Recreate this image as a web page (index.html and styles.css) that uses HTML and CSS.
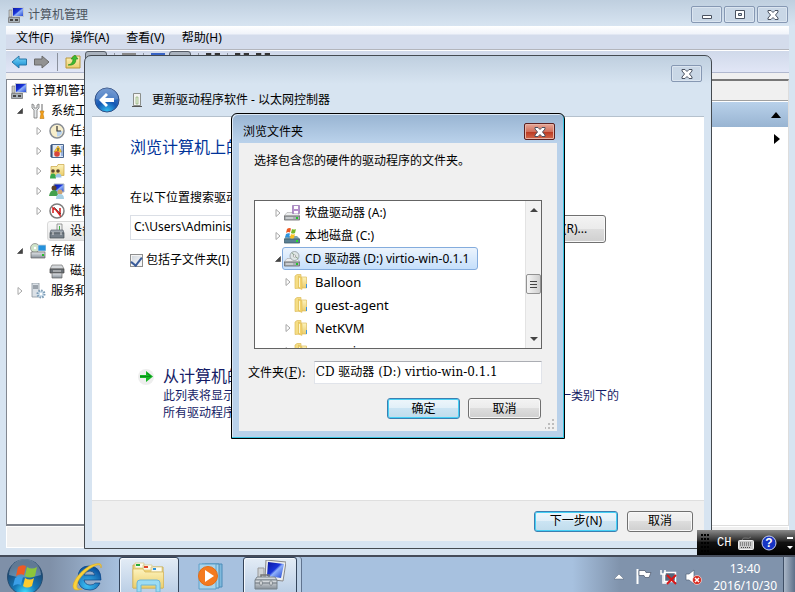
FILE: index.html
```html
<!DOCTYPE html>
<html lang="zh-CN">
    <head>
        <meta charset="utf-8">
        <title>计算机管理</title>
        <link rel="stylesheet" href="styles.css">
    </head>
    <body>
        <svg class="defs" width="0" height="0">
            <defs>
                <linearGradient id="gblue" x1="0" y1="0" x2="1" y2="1"><stop offset="0" stop-color="#0a16a0"/><stop offset=".45" stop-color="#1a35d8"/><stop offset=".55" stop-color="#8fb0fa"/><stop offset="1" stop-color="#1a3fd0"/></linearGradient>
                <linearGradient id="gfolder" x1="0" y1="0" x2="0" y2="1"><stop offset="0" stop-color="#fdf3bd"/><stop offset="1" stop-color="#ebce6c"/></linearGradient>
                <linearGradient id="gmetal" x1="0" y1="0" x2="0" y2="1"><stop offset="0" stop-color="#e4e7ea"/><stop offset="1" stop-color="#868f98"/></linearGradient>
                <linearGradient id="garrow" x1="0" y1="0" x2="0" y2="1"><stop offset="0" stop-color="#7fdcfb"/><stop offset="1" stop-color="#0f86cf"/></linearGradient>
                <radialGradient id="gie" cx=".4" cy=".8" r=".8"><stop offset="0" stop-color="#3cc0f5"/><stop offset="1" stop-color="#0a4f9c"/></radialGradient>
                <radialGradient id="gorb" cx=".5" cy=".95" r=".8"><stop offset="0" stop-color="#3fe0ff"/><stop offset=".4" stop-color="#1679b8"/><stop offset="1" stop-color="#1c3f66"/></radialGradient>
                <radialGradient id="gback" cx=".5" cy="1" r=".9"><stop offset="0" stop-color="#35c5f5"/><stop offset=".5" stop-color="#1458b4"/><stop offset="1" stop-color="#4a7cc4"/></radialGradient>
            </defs>
            <symbol id="computer" viewBox="0 0 16 16">
                <path d="M1 3h3v7H1z" fill="#c9c9c4" stroke="#777" stroke-width=".6"/>
                <path d="M4.500 .5h11v9h-11z" fill="url(#gblue)" stroke="#c3c9d0"/>
                <path d="M8 10h4v1H8z" fill="#999"/>
                <path d="M.5 10.500h11v5H.5z" fill="#a9b1b7" stroke="#777" stroke-width=".8"/>
                <path d="M2 12h3v2H2zM7 12h3v2H7z" fill="#444"/>
            </symbol>
            <symbol id="tools" viewBox="0 0 16 16">
                <path d="M2 1v4l2 2v8h3V7l2-2V1L7 2v3H4V2z" fill="#e5e8ea" stroke="#777" stroke-width=".8"/>
                <path d="M12 1v7" stroke="#9a9a9a" stroke-width="1.500"/>
                <path d="M10 8h4l-1 3 1 4.500h-4l1-4.500z" fill="#f3a01c" stroke="#c07a10" stroke-width=".6"/>
            </symbol>
            <symbol id="clock" viewBox="0 0 16 16">
                <circle cx="8" cy="8" r="7" fill="#f7eecb" stroke="#888d94" stroke-width="1.500"/>
                <path d="M8 8h5.500A5.500 5.500 0 0 1 8 13.500z" fill="#b9d3ef"/>
                <path d="M8 3v5h4" fill="none" stroke="#333" stroke-width="1.200"/>
            </symbol>
            <symbol id="event" viewBox="0 0 16 16">
                <path d="M2.500 1.500h12v13h-12z" fill="#dfe9f5" stroke="#4a668e"/>
                <path d="M1 3h3M1 5h3M1 7h3M1 9h3M1 11h3M1 13h3" stroke="#223a66"/>
                <path d="M9 3l4 6H5z" fill="#ffc930" stroke="#c79010" stroke-width=".6"/><path d="M9 5v3" stroke="#333"/>
                <circle cx="8" cy="11" r="2.800" fill="#d9463a"/><path d="M13 3v10" stroke="#5a82c8"/>
            </symbol>
            <symbol id="share" viewBox="0 0 16 16">
                <path d="M2 3.500h6l1-2h6v11H2z" fill="url(#gfolder)" stroke="#c9a544" stroke-width=".7"/>
                <circle cx="4" cy="8" r="1.800" fill="#5b4630"/><circle cx="9" cy="8" r="1.800" fill="#5b4630"/>
                <path d="M1 15.500q0-5 3-5t3 5z" fill="#37a84b"/><path d="M6.500 14.500q0-4 3-4t3 4z" fill="#9cc4e8"/>
            </symbol>
            <symbol id="users" viewBox="0 0 16 16">
                <path d="M5 1h10v8H5z" fill="url(#gblue)" stroke="#aab4c0"/>
                <circle cx="5" cy="5" r="2.500" fill="#5b4229"/><path d="M0 13q1-6 5-6t4 6z" fill="#44a04e"/>
                <circle cx="11" cy="9" r="2.500" fill="#d0a372"/><path d="M7 16q0-5 4-5t4 5z" fill="#a5cfe4"/>
            </symbol>
            <symbol id="perf" viewBox="0 0 16 16">
                <circle cx="8" cy="8" r="7" fill="#fff" stroke="#7c7c7c" stroke-width="1.500"/>
                <path d="M4 10V5l3 2 4 5V5" fill="none" stroke="#d51a1a" stroke-width="1.500"/>
                <path d="M5 4l7 7" stroke="#333" stroke-width=".7"/>
            </symbol>
            <symbol id="device" viewBox="0 0 16 16">
                <path d="M8 1h5v7H8z" fill="#eef0f0" stroke="#777" stroke-width=".7"/><path d="M10 3h1v4h-1z" fill="#43b645"/>
                <path d="M2 7h12l1 3H1z" fill="#9ea7b0" stroke="#5d6670" stroke-width=".7"/>
                <path d="M1 10h14v5H1z" fill="#77818b" stroke="#454d55" stroke-width=".7"/>
                <path d="M4 9v3M12 9v3" stroke="#ddd"/>
            </symbol>
            <symbol id="storage" viewBox="0 0 16 16">
                <circle cx="5" cy="5" r="4.500" fill="#cfe3c9" stroke="#8b8b8b" stroke-width=".8"/><circle cx="5" cy="5" r="1.200" fill="#fff"/>
                <path d="M8 2h8v6H8z" fill="#2592dc" stroke="#c7d0d8" stroke-width=".8"/>
                <path d="M1 9h14v6H1z" fill="url(#gmetal)" stroke="#666" stroke-width=".7"/><path d="M12 11h2v2h-2z" fill="#27bd2c"/>
            </symbol>
            <symbol id="disk" viewBox="0 0 16 16">
                <path d="M3 2h10l2 4H1z" fill="#d3d6d9" stroke="#777" stroke-width=".7"/>
                <path d="M1 6h14v4H1z" fill="#6c7278" stroke="#444" stroke-width=".7"/>
                <path d="M3 10h10v5H3z" fill="url(#gmetal)" stroke="#666" stroke-width=".7"/><path d="M4 8h8" stroke="#ddd"/>
            </symbol>
            <symbol id="services" viewBox="0 0 16 16">
                <path d="M2 0h7v14H2z" fill="#dbe1e7" stroke="#8a949e" stroke-width=".8"/><path d="M3 3h5M3 5h5" stroke="#5b6570"/>
                <circle cx="11" cy="11" r="3.500" fill="#c9dcea" stroke="#7d9cb6" stroke-width="2" stroke-dasharray="1.500 1.200"/><circle cx="11" cy="11" r="1.200" fill="#fff"/>
            </symbol>
            <symbol id="drive" viewBox="0 0 16 16">
                <path d="M3 7.500h10l3 3.500H0z" fill="#eceeef" stroke="#999" stroke-width=".5"/>
                <path d="M.4 11h15.200v4H.4z" fill="#a9b0b5" stroke="#666" stroke-width=".8"/>
                <path d="M2 13h7" stroke="#e8e8e8"/><path d="M12 12h2v2h-2z" fill="#24c52b"/>
            </symbol>
            <symbol id="folder" viewBox="0 0 14 16">
                <path d="M1 2l2-1.500h4V14l-6 .5z" fill="#f5dd84" stroke="#dcbb5c" stroke-width=".7"/>
                <path d="M7 3h5.500v11H7z" fill="url(#gfolder)" stroke="#dcbb5c" stroke-width=".7"/>
                <path d="M4.500 2L8 4v11.500L4.500 14z" fill="#f3d26c" stroke="#d9b650" stroke-width=".5"/><path d="M5.500 4v9" stroke="#fdf6cf"/><path d="M12.500 10v4" stroke="#3d93e0"/>
            </symbol>
            <symbol id="closed" viewBox="0 0 8 10"><path d="M2 1.500L6 5 2 8.500z" fill="#fff" stroke="#a6a6a6"/></symbol>
            <symbol id="opened" viewBox="0 0 8 10"><path d="M6.500 2.500v5h-5z" fill="#444" stroke="#222" stroke-width=".5"/></symbol>
            <symbol id="cross" viewBox="0 0 12 10"><path d="M1 .5h3l2 2 2-2h3v1.500L8.500 5 11 8v1.500H8l-2-2-2 2H1V8l2.500-3L1 2z" fill="#fff" stroke="#4a5260"/></symbol>
        </svg>

        <div class="desktop">
            <main class="window">
                <div class="titlebar">
                    <svg class="icon"><use href="#computer"/></svg>
                    <span>计算机管理</span>
                    <div class="controls">
                        <button class="control" aria-label="最小化"><svg width="12" height="10"><path d="M1.500 5.500h9v3h-9z" fill="#fff" stroke="#4a5260"/></svg></button>
                        <button class="control" aria-label="最大化"><svg width="12" height="10"><path d="M1.500 .5h9v8h-9z" fill="#fff" stroke="#4a5260"/><path d="M4.500 3.500h3v2h-3z" fill="#c9d7e6" stroke="#4a5260"/></svg></button>
                        <button class="control" aria-label="关闭"><svg width="12" height="10"><use href="#cross"/></svg></button>
                    </div>
                </div>
                <nav class="menubar">
                    <button>文件(F)</button>
                    <button>操作(A)</button>
                    <button>查看(V)</button>
                    <button>帮助(H)</button>
                </nav>
                <div class="toolbar">
                    <button aria-label="后退"><svg width="16" height="14"><path d="M1 7l7-6v3h7.500v6H8v3z" fill="url(#garrow)" stroke="#2877a8"/></svg></button>
                    <button aria-label="前进"><svg width="16" height="14"><path d="M15 7L8 1v3H.5v6H8v3z" fill="#929292" stroke="#6b6b6b"/></svg></button>
                    <span class="divider"></span>
                    <button aria-label="向上"><svg width="16" height="16"><path d="M1 4h6l1-2h7v12H1z" fill="url(#gfolder)" stroke="#b9973b"/><path d="M3 11q5-1 5-6H6l4-4 3 4h-2q0 7-8 6z" fill="#3dbb31" stroke="#27861f" stroke-width=".6"/></svg></button>
                    <button class="pressed" aria-label="显示控制台树"></button>
                    <span class="divider"></span>
                    <button class="tool gray" aria-label="导出列表"></button>
                    <span class="divider"></span>
                    <button class="tool blue" aria-label="帮助"></button>
                    <button class="pressed" aria-label="显示操作窗格"></button>
                    <span class="divider"></span>
                    <button class="tool dark" aria-label="扫描"></button>
                    <span class="divider"></span>
                    <button class="tool dark" aria-label="更新"></button>
                    <button class="tool dark" aria-label="禁用"></button>
                </div>
                <div class="panes">
                    <ul class="tree">
                        <li><svg class="icon"><use href="#computer"/></svg>计算机管理(本地)</li>
                        <li class="level2"><svg class="twist"><use href="#opened"/></svg><svg class="icon"><use href="#tools"/></svg>系统工具</li>
                        <li class="level3"><svg class="twist"><use href="#closed"/></svg><svg class="icon"><use href="#clock"/></svg>任务计划程序</li>
                        <li class="level3"><svg class="twist"><use href="#closed"/></svg><svg class="icon"><use href="#event"/></svg>事件查看器</li>
                        <li class="level3"><svg class="twist"><use href="#closed"/></svg><svg class="icon"><use href="#share"/></svg>共享文件夹</li>
                        <li class="level3"><svg class="twist"><use href="#closed"/></svg><svg class="icon"><use href="#users"/></svg>本地用户和组</li>
                        <li class="level3"><svg class="twist"><use href="#closed"/></svg><svg class="icon"><use href="#perf"/></svg>性能</li>
                        <li class="level3"><svg class="twist"></svg><span class="current"><svg class="icon"><use href="#device"/></svg>设备管理器</span></li>
                        <li class="level2"><svg class="twist"><use href="#opened"/></svg><svg class="icon"><use href="#storage"/></svg>存储</li>
                        <li class="level3"><svg class="twist"></svg><svg class="icon"><use href="#disk"/></svg>磁盘管理</li>
                        <li class="level2"><svg class="twist"><use href="#closed"/></svg><svg class="icon"><use href="#services"/></svg>服务和应用程序</li>
                    </ul>
                    <div class="middle"></div>
                    <aside class="actions">
                        <div class="actions-head"></div>
                        <div class="actions-group"><svg width="10" height="6"><path d="M5 0l5 6H0z"/></svg></div>
                        <div class="actions-more"><svg width="6" height="10"><path d="M0 0l6 5-6 5z"/></svg></div>
                    </aside>
                </div>
                <div class="statusbar"></div>
            </main>

            <section class="wizard">
                <div class="wizard-caption">
                    <button class="control" aria-label="关闭"><svg width="12" height="10"><use href="#cross"/></svg></button>
                </div>
                <header class="wizard-head">
                    <button class="back" aria-label="后退"><svg width="26" height="26"><circle cx="13" cy="13" r="12" fill="url(#gback)" stroke="#304f86"/><path d="M2 12a11 11 0 0 1 22 0q-11 4-22 0z" fill="#fff" opacity=".2"/><path d="M5 13l7-7 2 2-3 3h9v4h-9l3 3-2 2z" fill="#fff"/></svg></button>
                    <svg width="10" height="16"><path d="M1.500 1.500h7v12h-7z" fill="#f3f3f0" stroke="#8b8f8b"/><path d="M4 5h2v7H4z" fill="#e4efd8" stroke="#7fa668" stroke-width=".6"/><path d="M0 14.500h10" stroke="#555"/></svg>
                    <span>更新驱动程序软件 - 以太网控制器</span>
                </header>
                <div class="wizard-body">
                    <h1>浏览计算机上的驱动程序文件</h1>
                    <label class="path-label" for="path">在以下位置搜索驱动程序软件:</label>
                    <div class="path-row">
                        <input id="path" type="text" value="C:\Users\Administrator\Documents">
                        <button class="button browse">浏览(R)...</button>
                    </div>
                    <label class="check"><input type="checkbox" checked><span>包括子文件夹(I)</span></label>
                    <button class="choice">
                        <svg width="17" height="17"><circle cx="8" cy="9" r="8" fill="#eee"/><path d="M2 7h6V3l7 5.500L8 14v-4H2z" fill="#14b823"/><path d="M2 8.500h11M9 5l4 3.500" fill="none" stroke="#0b8a1c"/></svg>
                        <span class="choice-title">从计算机的设备驱动程序列表中选择(L)</span>
                        <span class="choice-note">此列表将显示与该设备兼容的已安装的驱动程序软件，以及与该设备处于同一类别下的所有驱动程序软件。</span>
                    </button>
                </div>
                <footer class="wizard-foot">
                    <button class="button primary next">下一步(N)</button>
                    <button class="button cancel">取消</button>
                </footer>
            </section>

            <section class="dialog">
                <div class="dialog-caption">
                    <span>浏览文件夹</span>
                    <button class="close" aria-label="关闭"><svg width="12" height="10"><use href="#cross"/></svg></button>
                </div>
                <div class="dialog-body">
                    <p>选择包含您的硬件的驱动程序的文件夹。</p>
                    <div class="browser">
                        <ul class="folders">
                            <li><svg class="twist"><use href="#closed"/></svg><span class="item"><svg class="icon"><use href="#drive"/><path d="M8.500 .5h7v8h-7z" fill="#b58fcb" stroke="#8c68aa" stroke-width=".6"/><path d="M10 1h4v3h-4zM10 6h4v2.500h-4z" fill="#fff"/></svg>软盘驱动器 (A:)</span></li>
                            <li><svg class="twist"><use href="#closed"/></svg><span class="item"><svg class="icon"><path d="M2 8h11l3 3H0z" fill="#7fa3b4"/><path d="M.4 11h15.200v4H.4z" fill="#5b8093" stroke="#3d5b6a" stroke-width=".8"/><path d="M12 12h2v2h-2z" fill="#24e52b"/><path d="M3 1q2-1.500 4-.5l-1 4q-2-1-4 .5z" fill="#ed5a24"/><path d="M8 1q2 1 4 0l-1 4q-2 1-4 0z" fill="#77b829"/><path d="M2 6q2-1 4-.5l-1 4q-2-1-4 0z" fill="#2f94dd"/><path d="M7 6q2 1 4 0l-1 4q-2 1-4 0z" fill="#fbc321"/></svg>本地磁盘 (C:)</span></li>
                            <li><svg class="twist"><use href="#opened"/></svg><span class="item selected"><svg class="icon"><use href="#drive"/><circle cx="10.500" cy="5" r="4.500" fill="#dfe6e6" stroke="#848c90" stroke-width=".7"/><path d="M10.500 5L8 1.500M10.500 5l3.500 2.500" stroke="#8aa58a"/><circle cx="10.500" cy="5" r="1.200" fill="#fff" stroke="#888" stroke-width=".6"/></svg>CD 驱动器 (D:) virtio-win-0.1.1</span></li>
                            <li class="sub"><svg class="twist"><use href="#closed"/></svg><span class="item"><svg class="folder"><use href="#folder"/></svg>Balloon</span></li>
                            <li class="sub"><svg class="twist"></svg><span class="item"><svg class="folder"><use href="#folder"/></svg>guest-agent</span></li>
                            <li class="sub"><svg class="twist"><use href="#closed"/></svg><span class="item"><svg class="folder"><use href="#folder"/></svg>NetKVM</span></li>
                            <li class="sub"><svg class="twist"><use href="#closed"/></svg><span class="item"><svg class="folder"><use href="#folder"/></svg>pvpanic</span></li>
                        </ul>
                        <div class="scrollbar">
                            <svg width="8" height="4"><path d="M4 0l4 4H0z" fill="#444"/></svg>
                            <div class="thumb"><i></i><i></i><i></i></div>
                            <svg width="8" height="4"><path d="M0 0h8L4 4z" fill="#444"/></svg>
                        </div>
                    </div>
                    <div class="name-row">
                        <label for="folder-name">文件夹(<u>F</u>):</label>
                        <input id="folder-name" type="text" value="CD 驱动器 (D:) virtio-win-0.1.1">
                    </div>
                    <div class="dialog-buttons">
                        <button class="button primary">确定</button>
                        <button class="button">取消</button>
                    </div>
                    <svg class="grip" width="10" height="10"><path d="M7 0h2v2H7zM7 4h2v2H7zM7 8h2v2H7zM3 4h2v2H3zM3 8h2v2H3zM0 8h1v2H0z" fill="#bdbdbd"/></svg>
                </div>
            </section>

            <div class="language">
                <svg width="9" height="18"><path d="M1 0v18M4 0v18M7 0v18" stroke="#000" stroke-width="2" stroke-dasharray="2 2"/></svg>
                <span>CH</span>
                <svg width="16" height="14"><path d="M4 4q1-3 4-2t5-1" fill="none" stroke="#777"/><rect x=".5" y="4.500" width="15" height="9" rx="1" fill="#c9c9c9" stroke="#efefef"/><path d="M2 7h12M2 9h12M3 11.500h10" stroke="#444" stroke-dasharray="1 1"/></svg>
                <svg width="16" height="16"><circle cx="8" cy="8" r="7" fill="#1634c4" stroke="#c7cff0"/><text x="8" y="12" text-anchor="middle" class="question">?</text></svg>
                <svg class="options" width="6" height="14"><path d="M0 1h6v2H0zM0 10h6l-3 3z" fill="#fff"/></svg>
            </div>

            <footer class="taskbar">
                <button class="start" aria-label="开始"><svg width="38" height="38"><circle cx="19" cy="19" r="17.500" fill="url(#gorb)" stroke="#274d70"/><path d="M3 17a16 16 0 0 1 32 0q-16 5-32 0z" fill="#fff" opacity=".3"/><path d="M12 9q4-3 8-1l-2 9q-4-2-8 1z" fill="#ee5a23"/><path d="M21 9q5 3 10 0l-2 9q-5 3-10 0z" fill="#8cc63a"/><path d="M9 20q4-3 8-1l-2 8q-4-2-8 1z" fill="#3b9fe8"/><path d="M19 20q5 3 9 0l-2 8q-5 3-9 0z" fill="#fccb2e"/></svg></button>
                <button class="task ie" aria-label="Internet Explorer"><svg width="34" height="32"><path d="M31 19H14q1 5 6 5 4 0 5-2h5q-3 7-10 7-12 0-12-12T19 5q12 0 12 14zM14 14h11q-1-4-5-4-5 0-6 4z" fill="url(#gie)" stroke="#0c4484" stroke-width=".7"/><path d="M31 7q2-6-6-4C15 5 4 17 3 25q0 6 9 3-6 1-5-4C8 17 18 7 27 4q4-1 4 3z" fill="#fbd23a" stroke="#d9a722" stroke-width=".6"/></svg></button>
                <button class="task active" aria-label="资源管理器"><svg width="34" height="32"><path d="M1 9V4h9l2 3h9v-1h10v21H1z" fill="#f3d77a" stroke="#c9ac55"/><path d="M3 2h9v5H3zM11 4h9v5h-9zM19 6h11v5H19z" fill="#fdfbee" stroke="#d5c583" stroke-width=".7"/><path d="M4 3h4v2H4z" fill="#25ac3c"/><path d="M12 5h4v2h-4z" fill="#df442a"/><path d="M21 7h3v2h-3z" fill="#2c93dc"/><path d="M1 8h10l2 3h18.500v16H1z" fill="url(#gfolder)" stroke="#d5b458" stroke-width=".7"/><path d="M5 31v-9q0-3 3-3h17q3 0 3 3v9h-4v-7H9v7z" fill="#9bdcf4" stroke="#6db6d8"/></svg></button>
                <button class="task" aria-label="Media Player"><svg width="30" height="30"><path d="M9 3h17v23H9z" fill="#7fb9dc" stroke="#4c8cb8"/><path d="M6 3h17v24H6z" fill="#a5d4ec" stroke="#4c8cb8"/><path d="M3 3h17v25H3z" fill="#a9d3ea" stroke="#5fa0c8"/><circle cx="12" cy="15" r="9.500" fill="#f47a1f" stroke="#e56c14"/><path d="M9 9l9 6-9 6z" fill="#fff"/></svg></button>
                <button class="task active mmc" aria-label="计算机管理"><svg width="32" height="32"><path d="M12 0l20 2-3 19-18-2z" fill="#eceeef" stroke="#888"/><path d="M14 2l16 2-3 14-14-2z" fill="url(#gblue)"/><path d="M4 8h6v11H4z" fill="#cfd2d4" stroke="#999"/><path d="M7 19v-4h8v4" fill="none" stroke="#777" stroke-width="1.500"/><path d="M3 17h18l2 3H1z" fill="#d3d8dc" stroke="#7d858d"/><path d="M1 20h22v9H1z" fill="url(#gmetal)" stroke="#79828a"/><path d="M1 23h22" stroke="#6a737b"/><path d="M6 21h2v4H6zM16 21h2v4h-2z" fill="#fff" stroke="#59616a" stroke-width=".6"/></svg></button>
                <div class="tray">
                    <svg width="10" height="6"><path d="M5 0l5 5H0z" fill="#fff" stroke="#55657b" stroke-width=".5"/></svg>
                    <svg width="16" height="16"><path d="M1.500 0v15" stroke="#fff" stroke-width="2"/><path d="M3 1.500h6l1 2h5l-2 5H9l-1-2H3z" fill="#fff" stroke="#4a5568" stroke-width=".7"/></svg>
                    <svg width="17" height="16"><path d="M4.500 3.500h11v9h-11z" fill="#56657b" stroke="#fff" stroke-width="1.500"/><path d="M1 1v4h4V1M3 5v9h6" fill="none" stroke="#fff" stroke-width="1.500"/><path d="M7 6l9 9M16 6l-9 9" stroke="#d81818" stroke-width="2"/></svg>
                    <svg width="17" height="16"><path d="M1 5h3l5-4v14l-5-4H1z" fill="#fff" stroke="#54647a" stroke-width=".7"/><circle cx="12" cy="11" r="4.500" fill="#d8281c" stroke="#fff" stroke-width=".6"/><path d="M10 9l4 4M14 9l-4 4" stroke="#fff" stroke-width="1.500"/></svg>
                    <div class="clock"><span>13:40</span><span>2016/10/30</span></div>
                    <button class="show-desktop" aria-label="显示桌面"></button>
                </div>
            </footer>
        </div>
    </body>
</html>
```

FILE: styles.css
```css
* {
    box-sizing: border-box;
}
body {
    margin: 0;
    font-family: "Noto Sans", "Noto Sans CJK SC", sans-serif;
    font-size: 12px;
    line-height: 16px;
    color: #000;
}
button, input {
    font: inherit;
    color: inherit;
    margin: 0;
}
button {
    padding: 0;
    border: 0;
    background: none;
}
ul {
    list-style: none;
    margin: 0;
    padding: 0;
}
svg {
    flex: none;
    display: block;
}
.defs {
    position: absolute;
}
.icon {
    width: 16px;
    height: 16px;
}
.folder {
    width: 14px;
    height: 16px;
}
.twist {
    width: 12px;
    height: 10px;
}
.desktop {
    position: relative;
    display: flex;
    flex-direction: column;
    height: 100vh;
    overflow: hidden;
}

/* computer management window */
.window {
    flex: 1;
    min-height: 0;
    display: flex;
    flex-direction: column;
    padding: 0 6px 7px;
    background: linear-gradient(#bfcfdf, #d7e4f1 26px);
}
.titlebar {
    display: flex;
    align-items: center;
    gap: 4px;
    height: 26px;
    padding: 3px 0 0 2px;
    color: #4b545e;
    flex: none;
}
.controls {
    display: flex;
    gap: 2px;
    margin-left: auto;
    margin-right: 1px;
}
.control {
    display: flex;
    align-items: center;
    justify-content: center;
    width: 31px;
    height: 17px;
    border: 1px solid #8698b3;
    border-radius: 2px;
    background: #c9d7e6;
    box-shadow: inset 0 0 0 1px #dbe5f0;
}
.menubar {
    display: flex;
    flex: none;
    gap: 17px;
    height: 24px;
    padding: 0 10px;
    background: linear-gradient(#fff, #f0f3fa 8px, #d4dcec 9px, #d4dcec);
    border-bottom: 1px solid #b3b5bc;
}
.toolbar {
    display: flex;
    flex: none;
    align-items: center;
    gap: 7px;
    height: 23px;
    padding: 0 5px;
    border-top: 1px solid #fff;
    border-bottom: 1px solid #b0b8cf;
    background: linear-gradient(#d0d9ea, #e1e6f6);
}
.divider {
    width: 1px;
    height: 18px;
    background: #8b919d;
}
.pressed {
    width: 22px;
    height: 21px;
    margin-left: -3px;
    border: 1px solid #555c66;
    border-radius: 3px;
    background: #aab3be;
}
.tool {
    width: 14px;
    height: 18px;
    border-top: 2px solid #888;
}
.tool.blue {
    border-color: #3763c4;
}
.tool.dark {
    border-top: 2px dashed #333;
}
.panes {
    flex: 1;
    min-height: 0;
    display: flex;
    gap: 4px;
    padding-top: 6px;
    background: #f0f0f0;
}
.tree {
    width: 200px;
    padding-top: 1px;
    overflow: hidden;
    background: #fff;
    border: 1px solid #828790;
    border-bottom-width: 2px;
}
.tree li {
    display: flex;
    align-items: center;
    gap: 5px;
    height: 20px;
    padding-left: 4px;
    white-space: nowrap;
}
.tree .level2 {
    padding-left: 7px;
}
.tree .level3 {
    padding-left: 26px;
}
.tree .twist {
    margin-right: -1px;
}
.current {
    display: flex;
    align-items: center;
    gap: 5px;
    height: 20px;
    margin-left: -2px;
    padding: 0 6px 0 1px;
    border: 1px solid #d9d9d9;
    border-radius: 3px;
    background: linear-gradient(#fafafa, #e5e5e5);
}
.middle {
    flex: 1;
    background: #fff;
    border: 1px solid #828790;
}
.actions {
    width: 150px;
    background: #fff;
    border-top: 2px solid #777;
    border-right: 1px solid #ddd;
    border-bottom: 1px solid #ddd;
}
.actions-head {
    height: 20px;
    background: #f0f0f0;
    border-bottom: 1px solid #a0a0a0;
}
.actions-group, .actions-more {
    display: flex;
    align-items: center;
    justify-content: flex-end;
    height: 25px;
    padding-right: 7px;
}
.actions-group {
    margin-top: 1px;
    background: linear-gradient(#b9d1ea, #98b4d2);
}
.actions-more {
    height: 23px;
    padding-right: 8px;
}
.statusbar {
    flex: none;
    height: 22px;
    border: 1px solid #fff;
    background: #f0f0f0;
}

/* driver update wizard */
.wizard {
    position: absolute;
    top: 55px;
    left: 84px;
    right: 83px;
    bottom: 43px;
    display: flex;
    flex-direction: column;
    padding: 0 7px 7px;
    border: 1px solid #444a50;
    border-radius: 7px 7px 0 0;
    background: linear-gradient(#bfcfdf, #d7e4f1 28px);
}
.wizard-caption {
    display: flex;
    justify-content: flex-end;
    padding: 9px 2px 0;
    height: 27px;
}
.wizard-head {
    display: flex;
    align-items: center;
    gap: 12px;
    height: 34px;
    padding-left: 2px;
    border-bottom: 1px solid #b5c1cd;
}
.wizard-head svg + span {
    margin-left: -2px;
}
.wizard-body {
    flex: 1;
    min-height: 0;
    display: flex;
    flex-direction: column;
    align-items: flex-start;
    padding: 18px 38px 0;
    background: #fff;
}
.wizard-body h1 {
    margin: 0 0 31px;
    font-size: 16px;
    line-height: 24px;
    font-weight: normal;
    color: #003399;
}
.path-label {
    margin-bottom: 9px;
}
.path-row {
    display: flex;
    align-items: flex-start;
    gap: 6px;
    width: 100%;
    padding-right: 60px;
}
.path-row input {
    flex: 1;
    height: 25px;
    padding: 0 3px 2px;
    border: 1px solid #dbdfe6;
}
.button {
    height: 21px;
    border: 1px solid #707070;
    border-radius: 3px;
    background: linear-gradient(#f3f3f3, #ebebeb 50%, #dddddd 50%, #cfcfcf);
    box-shadow: inset 0 0 0 1px #f8f8f8;
}
.button.primary {
    border-color: #3c7fb1;
    background: linear-gradient(#eef6fb, #e0eff8 50%, #cbe4f3 50%, #c0dcec);
    box-shadow: inset 0 0 0 1px #45d0f5;
}
.button.browse {
    width: 86px;
    height: 28px;
}
.check {
    display: flex;
    align-items: center;
    gap: 3px;
    margin-top: 9px;
}
.check input {
    appearance: none;
    display: flex;
    justify-content: center;
    width: 13px;
    height: 13px;
    border: 1px solid #8e8f8f;
    background: linear-gradient(135deg, #cdd3da, #fff);
    box-shadow: inset 0 0 0 1px #f4f4f4;
}
.check input:checked::after {
    content: "";
    width: 5px;
    height: 9px;
    border: solid #3a5c9a;
    border-width: 0 2px 2px 0;
    transform: rotate(38deg);
}
.choice {
    display: grid;
    grid-template-columns: 17px 1fr;
    column-gap: 8px;
    align-items: center;
    width: 100%;
    max-width: 500px;
    margin-top: 97px;
    padding: 0 0 0 8px;
    text-align: left;
    color: #151c66;
}
.choice-title {
    font-size: 16px;
    line-height: 22px;
}
.choice-note {
    grid-column: 2;
    line-height: 17px;
}
.wizard-foot {
    display: flex;
    align-items: center;
    justify-content: flex-end;
    gap: 9px;
    height: 41px;
    padding: 0 11px;
    border-top: 1px solid #dfdfdf;
    background: #f0f0f0;
}
.next {
    width: 84px;
}
.cancel {
    width: 66px;
}

/* folder picker */
.dialog {
    position: absolute;
    top: 113px;
    left: 231px;
    width: 334px;
    padding: 0 7px 7px;
    border: 1px solid #000;
    border-radius: 6px 6px 0 0;
    background: linear-gradient(#98b4d2, #b9d1ea 28px);
    box-shadow: inset -1px -1px #37c3e0, inset 1px 1px #dbe8f5;
}
.dialog-caption {
    display: flex;
    align-items: center;
    justify-content: space-between;
    height: 29px;
    padding: 6px 2px 0 4px;
}
.close {
    display: flex;
    align-items: center;
    justify-content: center;
    width: 31px;
    height: 17px;
    border: 1px solid #5b2020;
    border-radius: 2px;
    background: linear-gradient(#e7a798, #d1705c 50%, #b8361f 50%, #d4694c);
    box-shadow: inset 0 0 0 1px #e6b3a6;
}
.dialog-body {
    position: relative;
    padding: 10px 15px 12px;
    background: #f0f0f0;
}
.dialog-body p {
    margin: 0 0 31px;
}
.browser {
    display: flex;
    height: 149px;
    border: 1px solid #646464;
    background: #fff;
}
.folders {
    flex: 1;
    overflow: hidden;
}
.folders li {
    display: flex;
    align-items: center;
    height: 23px;
    padding-left: 17px;
    white-space: nowrap;
}
.folders .sub {
    padding-left: 27px;
}
.item {
    display: flex;
    align-items: center;
    gap: 5px;
    height: 23px;
    margin-left: -2px;
    padding: 0 8px 0 1px;
    border: 1px solid transparent;
    border-radius: 3px;
}
.sub .item {
    gap: 7px;
    font-size: 13px;
}
.item.selected {
    border-color: #84acdd;
    background: linear-gradient(#ecf4fd, #c5dffb);
}
.scrollbar {
    display: flex;
    flex-direction: column;
    align-items: center;
    width: 16px;
    padding: 7px 0;
    border-left: 1px solid #e3e3e3;
    background: #f2f2f2;
}
.thumb {
    display: flex;
    flex-direction: column;
    justify-content: center;
    gap: 2px;
    width: 15px;
    height: 20px;
    margin: 62px 0 auto;
    padding: 0 3px;
    border: 1px solid #929292;
    border-radius: 2px;
    background: linear-gradient(90deg, #f5f5f5, #d0d0d0);
}
.thumb i {
    height: 1px;
    background: #444;
}
.name-row {
    display: flex;
    align-items: center;
    gap: 8px;
    margin: 12px 0 14px -6px;
}
.name-row label, .name-row input {
    font-family: "DejaVu Serif", "Noto Sans CJK SC", serif;
}
.name-row input {
    flex: 1;
    min-width: 0;
    height: 23px;
    padding: 0 1px 4px;
    border: 1px solid #e1e4ea;
    border-top-color: #abadb3;
}
.dialog-buttons {
    display: flex;
    justify-content: flex-end;
    gap: 8px;
    padding-right: 1px;
}
.dialog-buttons .button {
    width: 73px;
}
.grip {
    position: absolute;
    right: 2px;
    bottom: 2px;
}

/* language bar */
.language {
    position: absolute;
    right: 0;
    bottom: 37px;
    display: flex;
    align-items: center;
    gap: 7px;
    width: 98px;
    height: 25px;
    padding: 0 2px 0 4px;
    color: #fff;
    font-family: "Liberation Mono", monospace;
    background: linear-gradient(#8a8a8a, #333 40%, #111 50%, #000);
}
.language .options {
    margin-left: auto;
}
.question {
    font: bold 12px "Liberation Sans", sans-serif;
    fill: #fff;
}

/* taskbar */
.taskbar {
    flex: none;
    display: flex;
    height: 37px;
    overflow: hidden;
    border-top: 2px solid #454c5a;
    background: linear-gradient(90deg, #7f90a8 50px, #a7c1df 120px, #a7c1df 72%, #8093ac 78%);
}
.start {
    margin: 1px 13px 0 6px;
}
.task {
    display: flex;
    justify-content: center;
    width: 60px;
    height: 40px;
    margin-right: 2px;
    padding-top: 3px;
    border: 1px solid transparent;
}
.active {
    border-color: #34445a;
    border-radius: 3px;
    background: linear-gradient(#e3ecf6, #b7cce4);
    box-shadow: inset 1px 1px #f4f8fc;
}
.mmc {
    width: 54px;
    padding-top: 2px;
    box-shadow: inset 1px 1px #f4f8fc, 4px 0 #bcd0e6, 5px 0 #60748f;
}
.tray {
    display: flex;
    align-items: center;
    gap: 8px;
    height: 39px;
    margin-left: auto;
    color: #fff;
}
.tray > svg:first-child {
    margin-right: 4px;
}
.clock {
    display: flex;
    flex-direction: column;
    align-items: center;
    line-height: 17px;
    padding: 0 0 0 3px;
}
.show-desktop {
    width: 12px;
    height: 40px;
    margin-left: -2px;
    border-left: 1px solid #3f4f66;
    background: linear-gradient(90deg, #aab7c8, #5d6f88);
}
```
